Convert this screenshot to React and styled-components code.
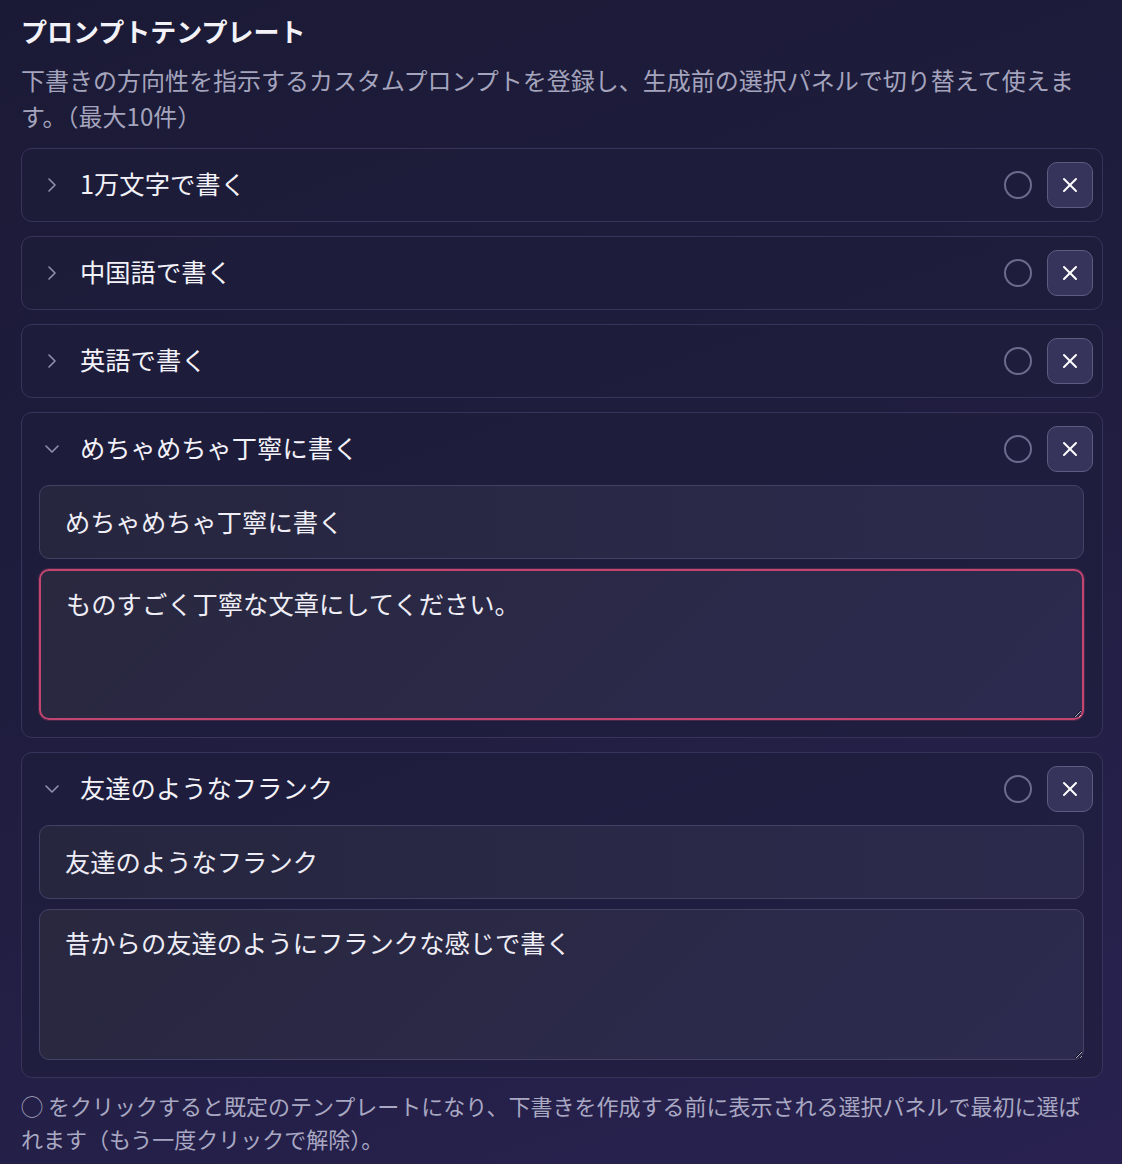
import { useState } from 'react'
import styled, { createGlobalStyle } from 'styled-components'
import { ChevronRight, ChevronDown, X } from 'lucide-react'

const GlobalStyle = createGlobalStyle`
    html, body {
        margin: 0;
        padding: 0;
        min-height: 100%;
    }
    body {
        background: linear-gradient(160deg, #1b1a36 0%, #1f1d3e 45%, #292251 100%);
        min-height: 1164px;
        color: #ecebf5;
        font-family: "Noto Sans CJK JP", "Noto Sans", sans-serif;
    }
`

const Pagina = styled.section`
    padding: 12px 19px 20px 21px;
`

const Titulo = styled.h2`
    margin: 0;
    font-size: 26px;
    line-height: 38px;
    font-weight: 700;
    color: #f3f2f8;
`

const Descricao = styled.p`
    margin: 12px 0 0;
    font-size: 24px;
    line-height: 36px;
    color: #a5a4bd;
    max-width: 1072px;
`

const Lista = styled.div`
    display: flex;
    flex-direction: column;
    gap: 14px;
    margin-top: 14px;
`

const Cartao = styled.div`
    border: 1.5px solid #36345a;
    border-radius: 11px;
    background: rgba(30, 29, 58, 0.55);
    padding: 0 9px ${p => (p.$aberto ? '17px' : '0')} 17px;
`

const Cabecalho = styled.div`
    display: flex;
    align-items: center;
    height: 72px;
`

const Seta = styled.span`
    display: flex;
    width: 26px;
    color: #9190ac;
    margin-left: 1px;
`

const Nome = styled.span`
    flex: 1;
    margin-left: 14px;
    padding-bottom: 4px;
    font-size: 25.3px;
    font-weight: 400;
    color: #f3f2f9;
`

const Radio = styled.button`
    width: 28px;
    height: 28px;
    border-radius: 50%;
    border: 2px solid #6d6b8d;
    background: transparent;
    padding: 0;
    margin-right: 15px;
`

const Fechar = styled.button`
    width: 46px;
    height: 46px;
    border-radius: 10px;
    border: 1.5px solid #5d5b80;
    background: #36345a;
    color: #ffffff;
    display: flex;
    align-items: center;
    justify-content: center;
    padding: 0;
`

const Campos = styled.div`
    display: flex;
    flex-direction: column;
    gap: 10px;
    margin-right: 9px;
`

const Entrada = styled.input`
    height: 74px;
    box-sizing: border-box;
    border: 1.5px solid #444264;
    border-radius: 10px;
    background: linear-gradient(90deg, #27263f 0%, #2b2a4c 100%);
    padding: 0 25px 3px;
    font-family: inherit;
    font-size: 25.3px;
    color: #efeef6;
    outline: none;
`

const Texto = styled.textarea`
    height: 151px;
    box-sizing: border-box;
    border: ${p => (p.$foco ? '2px solid #c2456f' : '1.5px solid #444264')};
    box-shadow: ${p => (p.$foco ? '0 0 0 1px rgba(194, 69, 111, 0.25)' : 'none')};
    border-radius: 10px;
    background: linear-gradient(135deg, #29283f 0%, #2c2a4f 100%);
    padding: 14px 25px;
    font-family: inherit;
    font-size: 25.3px;
    line-height: 36px;
    color: #efeef6;
    outline: none;
    resize: vertical;
    color-scheme: dark;
`

const Rodape = styled.p`
    margin: 11px 0 0;
    font-size: 22px;
    line-height: 33px;
    color: #a9a8c2;
    max-width: 1078px;
`

const modelos = [
    { nome: '1万文字で書く', aberto: false },
    { nome: '中国語で書く', aberto: false },
    { nome: '英語で書く', aberto: false },
    { nome: 'めちゃめちゃ丁寧に書く', aberto: true, texto: 'ものすごく丁寧な文章にしてください。', foco: true },
    { nome: '友達のようなフランク', aberto: true, texto: '昔からの友達のようにフランクな感じで書く' },
]

const Modelo = ({ item }) => {
    const [aberto, setAberto] = useState(item.aberto)
    return (
        <Cartao $aberto={aberto}>
            <Cabecalho onClick={() => setAberto(!aberto)}>
                <Seta>{aberto ? <ChevronDown size={24} strokeWidth={1.6} /> : <ChevronRight size={24} strokeWidth={1.6} />}</Seta>
                <Nome>{item.nome}</Nome>
                <Radio aria-label="既定" />
                <Fechar aria-label="削除"><X size={24} strokeWidth={2} /></Fechar>
            </Cabecalho>
            {aberto && (
                <Campos>
                    <Entrada defaultValue={item.nome} />
                    <Texto $foco={item.foco} defaultValue={item.texto} />
                </Campos>
            )}
        </Cartao>
    )
}

const App = () => {
    return (
        <>
            <GlobalStyle />
            <Pagina>
                <Titulo>プロンプトテンプレート</Titulo>
                <Descricao>
                    下書きの方向性を指示するカスタムプロンプトを登録し、生成前の選択パネルで切り替えて使えます。（最大10件）
                </Descricao>
                <Lista>
                    {modelos.map(m => <Modelo key={m.nome} item={m} />)}
                </Lista>
                <Rodape>
                    ◯ をクリックすると既定のテンプレートになり、下書きを作成する前に表示される選択パネルで最初に選ばれます（もう一度クリックで解除）。
                </Rodape>
            </Pagina>
        </>
    )
}

export default App
